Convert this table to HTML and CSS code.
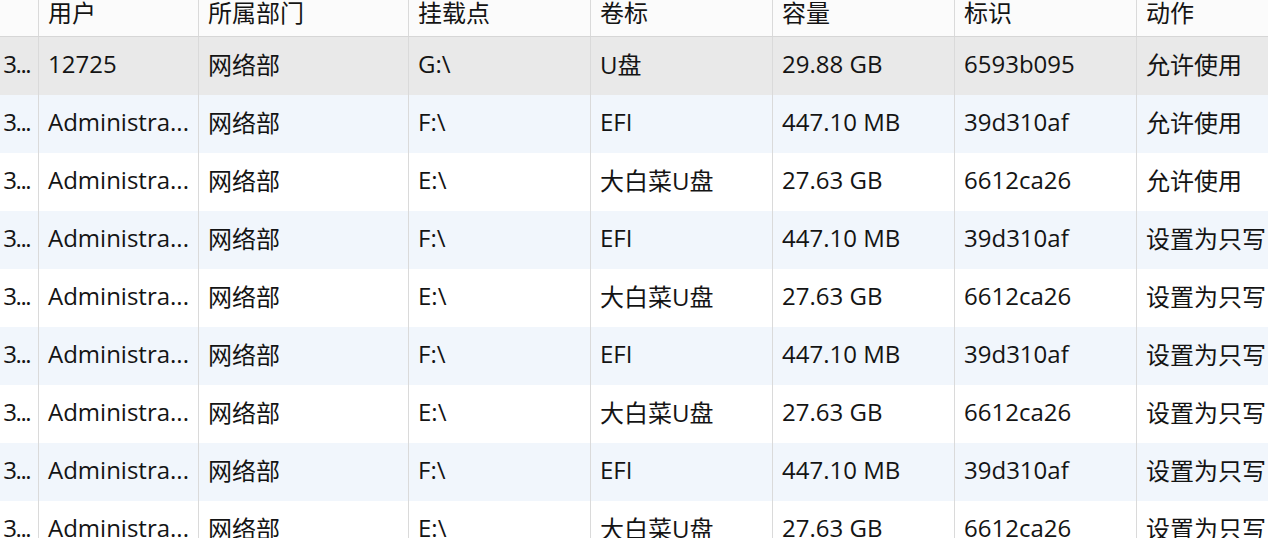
FILE: index.html
```html
<!DOCTYPE html>
<html lang="zh-CN">
<head>
<meta charset="utf-8">
<title>设备列表</title>
<link rel="stylesheet" href="styles.css">
</head>
<body>
<div class="table">
  <div class="row head">
    <div class="cell first"></div>
    <div class="cell">用户</div>
    <div class="cell">所属部门</div>
    <div class="cell">挂载点</div>
    <div class="cell">卷标</div>
    <div class="cell">容量</div>
    <div class="cell">标识</div>
    <div class="cell last">动作</div>
  </div>
  <div class="row selected">
    <div class="cell first">3...</div>
    <div class="cell">12725</div>
    <div class="cell">网络部</div>
    <div class="cell">G:\</div>
    <div class="cell">U盘</div>
    <div class="cell">29.88 GB</div>
    <div class="cell">6593b095</div>
    <div class="cell last">允许使用</div>
  </div>
  <div class="row alt">
    <div class="cell first">3...</div>
    <div class="cell">Administra...</div>
    <div class="cell">网络部</div>
    <div class="cell">F:\</div>
    <div class="cell">EFI</div>
    <div class="cell">447.10 MB</div>
    <div class="cell">39d310af</div>
    <div class="cell last">允许使用</div>
  </div>
  <div class="row">
    <div class="cell first">3...</div>
    <div class="cell">Administra...</div>
    <div class="cell">网络部</div>
    <div class="cell">E:\</div>
    <div class="cell">大白菜U盘</div>
    <div class="cell">27.63 GB</div>
    <div class="cell">6612ca26</div>
    <div class="cell last">允许使用</div>
  </div>
  <div class="row alt">
    <div class="cell first">3...</div>
    <div class="cell">Administra...</div>
    <div class="cell">网络部</div>
    <div class="cell">F:\</div>
    <div class="cell">EFI</div>
    <div class="cell">447.10 MB</div>
    <div class="cell">39d310af</div>
    <div class="cell last">设置为只写</div>
  </div>
  <div class="row">
    <div class="cell first">3...</div>
    <div class="cell">Administra...</div>
    <div class="cell">网络部</div>
    <div class="cell">E:\</div>
    <div class="cell">大白菜U盘</div>
    <div class="cell">27.63 GB</div>
    <div class="cell">6612ca26</div>
    <div class="cell last">设置为只写</div>
  </div>
  <div class="row alt">
    <div class="cell first">3...</div>
    <div class="cell">Administra...</div>
    <div class="cell">网络部</div>
    <div class="cell">F:\</div>
    <div class="cell">EFI</div>
    <div class="cell">447.10 MB</div>
    <div class="cell">39d310af</div>
    <div class="cell last">设置为只写</div>
  </div>
  <div class="row">
    <div class="cell first">3...</div>
    <div class="cell">Administra...</div>
    <div class="cell">网络部</div>
    <div class="cell">E:\</div>
    <div class="cell">大白菜U盘</div>
    <div class="cell">27.63 GB</div>
    <div class="cell">6612ca26</div>
    <div class="cell last">设置为只写</div>
  </div>
  <div class="row alt">
    <div class="cell first">3...</div>
    <div class="cell">Administra...</div>
    <div class="cell">网络部</div>
    <div class="cell">F:\</div>
    <div class="cell">EFI</div>
    <div class="cell">447.10 MB</div>
    <div class="cell">39d310af</div>
    <div class="cell last">设置为只写</div>
  </div>
  <div class="row">
    <div class="cell first">3...</div>
    <div class="cell">Administra...</div>
    <div class="cell">网络部</div>
    <div class="cell">E:\</div>
    <div class="cell">大白菜U盘</div>
    <div class="cell">27.63 GB</div>
    <div class="cell">6612ca26</div>
    <div class="cell last">设置为只写</div>
  </div>
</div>
</body>
</html>
```

FILE: styles.css
```css
html, body {
  margin: 0;
  padding: 0;
  background: #ffffff;
  overflow: hidden;
}

.table {
  width: 1268px;
  font-family: "Open Sans", "Noto Sans CJK SC", sans-serif;
  font-size: 24px;
  color: #141414;
}

.row {
  display: grid;
  grid-template-columns: 39px 160px 210px 182px 182px 182px 182px 1fr;
  height: 58px;
  background: #ffffff;
}

.row.alt {
  background: #f1f6fc;
}

.row.selected {
  background: #e9e9e9;
}

.row.head {
  height: 37px;
  background: #fbfbfb;
  border-bottom: 1px solid #d6d6d6;
  box-sizing: border-box;
}

.cell {
  display: flex;
  align-items: center;
  padding-left: 9px;
  padding-bottom: 5px;
  border-right: 1px solid #dadada;
  white-space: nowrap;
  overflow: hidden;
  min-width: 0;
  box-sizing: border-box;
}

.head .cell {
  align-items: flex-start;
  line-height: 26px;
  padding-top: 0;
  padding-bottom: 0;
}

.cell.first {
  justify-content: flex-end;
  padding-left: 0;
  padding-right: 8px;
  letter-spacing: -1.5px;
}

.cell.last {
  border-right: none;
  overflow: visible;
}
```
